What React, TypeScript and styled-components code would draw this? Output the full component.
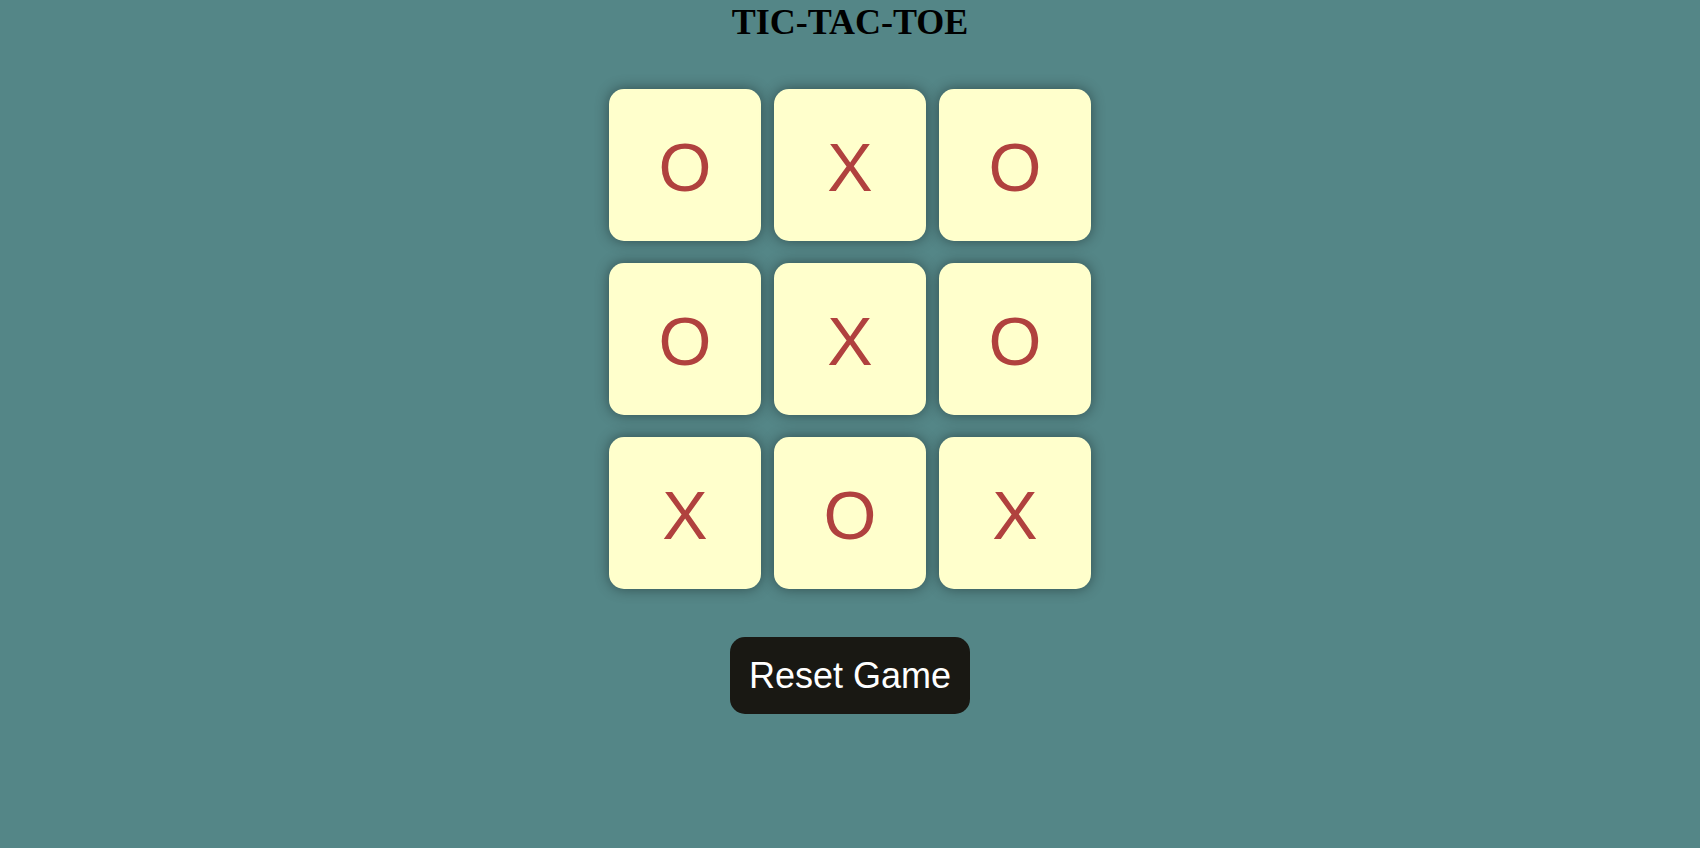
import React, { useState } from "react";
import styled, { createGlobalStyle } from "styled-components";

const GlobalStyle = createGlobalStyle`
  html, body {
    margin: 0;
    padding: 0;
    background: #548687;
  }
  body {
    min-height: 848px;
    font-family: "Liberation Serif", "Times New Roman", serif;
  }
`;

const Page = styled.main`
  display: flex;
  flex-direction: column;
  align-items: center;
  min-height: 848px;
  background: #548687;
`;

const Title = styled.h1`
  margin: 0;
  padding-top: 2px;
  font-family: "Liberation Serif", "Times New Roman", serif;
  font-size: 36px;
  font-weight: bold;
  color: #000;
  line-height: 40px;
  text-align: center;
`;

const Board = styled.div`
  margin-top: 47px;
  display: grid;
  grid-template-columns: repeat(3, 152px);
  grid-auto-rows: 152px;
  column-gap: 13px;
  row-gap: 22px;
`;

const Cell = styled.button`
  display: flex;
  align-items: center;
  justify-content: center;
  width: 152px;
  height: 152px;
  padding: 3px 0 0;
  border: none;
  border-radius: 15px;
  background: #ffffcc;
  box-shadow: 0 0 14px rgba(0, 0, 0, 0.42);
  font-family: "Liberation Sans", Arial, sans-serif;
  font-size: 68px;
  color: #b0413e;
  cursor: pointer;
`;

const ResetButton = styled.button`
  margin-top: 48px;
  padding: 18px 19px;
  border: none;
  border-radius: 15px;
  background: #191813;
  color: #ffffff;
  font-family: "Liberation Sans", Arial, sans-serif;
  font-size: 36px;
  line-height: 41px;
  cursor: pointer;
`;

const initial = ["O", "X", "O", "O", "X", "O", "X", "O", "X"];

export default function App() {
  const [cells, setCells] = useState<string[]>(initial);
  return (
    <>
      <GlobalStyle />
      <Page>
        <Title>TIC-TAC-TOE</Title>
        <Board>
          {cells.map((v, i) => (
            <Cell key={i}>{v}</Cell>
          ))}
        </Board>
        <ResetButton onClick={() => setCells(Array(9).fill(""))}>Reset Game</ResetButton>
      </Page>
    </>
  );
}
